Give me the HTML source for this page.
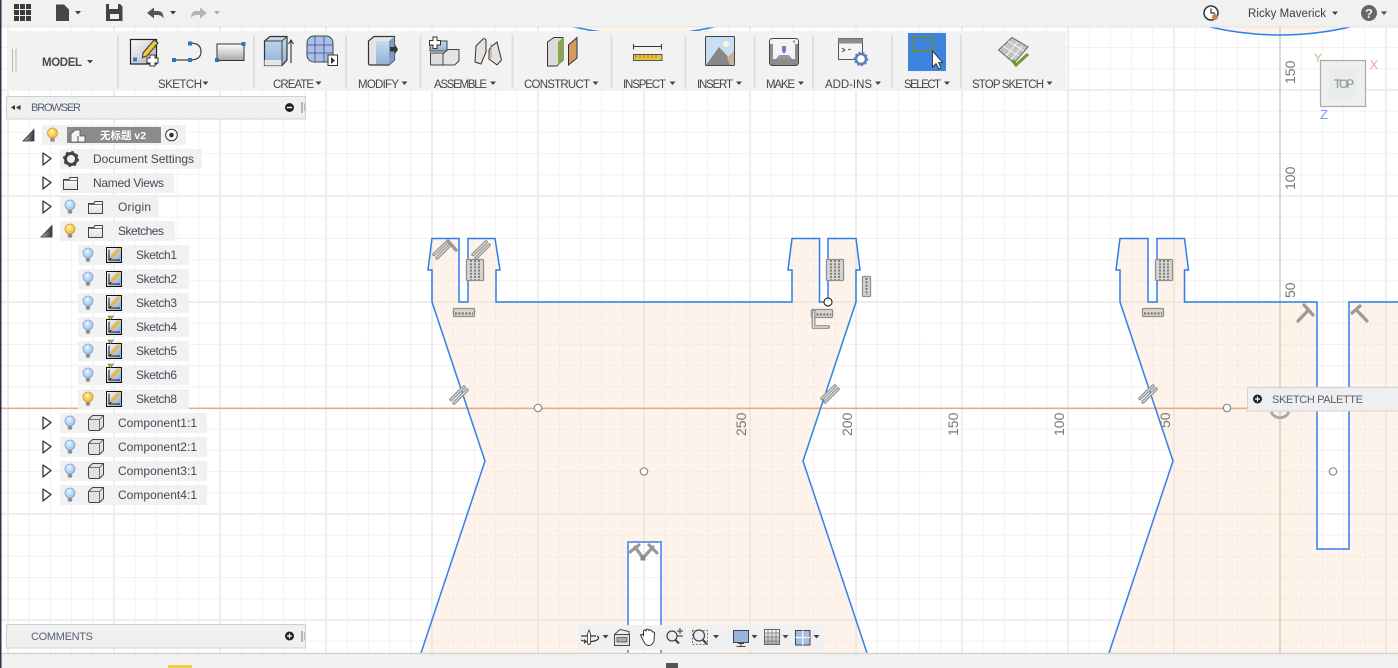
<!DOCTYPE html>
<html><head><meta charset="utf-8"><title>Sketch</title>
<style>
html,body{margin:0;padding:0;background:#fff;width:1398px;height:668px;overflow:hidden}
svg{display:block;position:absolute;left:0;top:0}
text{font-family:"Liberation Sans","Noto Sans CJK SC",sans-serif}
.t{font-size:11.5px;fill:#44464f}
.r{font-size:12px;fill:#444856}
.n{font-size:14px;fill:#777}
</style></head><body>
<svg width="1398" height="668" viewBox="0 0 1398 668" xmlns="http://www.w3.org/2000/svg">
<defs>
<pattern id="g1" patternUnits="userSpaceOnUse" x="1279.5" y="407.5" width="21.2" height="21.2"><rect width="1" height="21.2" fill="#f1f1f1"/><rect width="21.2" height="1" fill="#f1f1f1"/></pattern>
<pattern id="g2" patternUnits="userSpaceOnUse" x="1279" y="407" width="106" height="106"><rect width="2" height="106" fill="#eeeeee"/><rect width="106" height="2" fill="#eeeeee"/></pattern>
<pattern id="g3" patternUnits="userSpaceOnUse" x="1279.5" y="407.5" width="21.2" height="21.2"><path d="M.5 0V21.2M0 .5H21.2" stroke="#efe6dc" stroke-width="1" stroke-dasharray="3 2.300" fill="none"/></pattern>
<pattern id="g4" patternUnits="userSpaceOnUse" x="1279" y="407" width="106" height="106"><rect width="2" height="106" fill="#f0e7dd"/><rect width="106" height="2" fill="#f0e7dd"/></pattern>
<linearGradient id="gs" x1="0" y1="0" x2="1" y2="1"><stop offset="0" stop-color="#fff"/><stop offset="1" stop-color="#a9afb8"/></linearGradient>
<linearGradient id="gv" x1="0" y1="0" x2="0" y2="1"><stop offset="0" stop-color="#fff"/><stop offset="1" stop-color="#a8a8a8"/></linearGradient>
<linearGradient id="gb" x1="0" y1="0" x2="0" y2="1"><stop offset="0" stop-color="#c8daee"/><stop offset="1" stop-color="#8fb0d8"/></linearGradient>
<linearGradient id="gk" x1="0" y1="0" x2="1" y2="1"><stop offset="0" stop-color="#fff"/><stop offset="1" stop-color="#7fa3da"/></linearGradient>
<linearGradient id="gf" x1="0" y1="0" x2="0" y2="1"><stop offset="0" stop-color="#fdfdfd"/><stop offset="1" stop-color="#dfe3e6"/></linearGradient>
<linearGradient id="gt" x1="0" y1="0" x2="1" y2="0"><stop offset="0" stop-color="#bbb"/><stop offset="1" stop-color="#333"/></linearGradient>
<radialGradient id="bb" cx=".4" cy=".35" r=".7"><stop offset="0" stop-color="#e8f3fc"/><stop offset="1" stop-color="#8dbde6"/></radialGradient>
<radialGradient id="by" cx=".4" cy=".35" r=".7"><stop offset="0" stop-color="#fff3b0"/><stop offset="1" stop-color="#f0b020"/></radialGradient>
<g id="bulbB"><circle cx="0" cy="-2" r="5" fill="url(#bb)" stroke="#7fa8cc" stroke-width=".8"/><rect x="-2.200" y="3" width="4.400" height="3.600" rx="1" fill="#8c8c8c"/></g>
<g id="bulbY"><circle cx="0" cy="-2" r="5" fill="url(#by)" stroke="#d49a20" stroke-width=".8"/><rect x="-2.200" y="3" width="4.400" height="3.600" rx="1" fill="#8c8c8c"/></g>
<path id="tri" d="M0 0L8 5.500L0 12Z" fill="#fff" stroke="#333" stroke-width="1.300" stroke-linejoin="round"/>
<g id="folder"><path d="M.5 2.500H6L7 .5H14.500V12.500H.5Z" fill="url(#gf)" stroke="#444" stroke-width="1"/><path d="M.5 3.500H14.500" stroke="#555" stroke-width=".8"/></g>
<g id="sk"><rect x=".5" y=".5" width="15" height="15" fill="url(#gk)" stroke="#111"/><path d="M3 2.500V13H14" fill="none" stroke="#111" stroke-width="1"/><path d="M5 11L13 2" stroke="#e8b930" stroke-width="3"/><path d="M5 11L4 13" stroke="#333" stroke-width="1.200"/></g>
<g id="sw"><use href="#sk"/><path d="M2 -3H7L4.500 1Z" fill="#e9b53a" stroke="#555" stroke-width=".6"/></g>
<g id="comp"><path d="M.5 4.500L4.500 .5H15.500V11.500L11.500 15.500H2.500Q.5 15.500 .5 13.500Z" fill="#e0e2e4" stroke="#444" stroke-width="1"/><path d="M.5 4.500H11.500V15.500M11.500 4.500L15.500 .5" fill="none" stroke="#555" stroke-width=".8"/></g>
<g id="hblock" fill="none"><rect x=".5" y=".5" width="21" height="8" rx="1" fill="#d8d6d2" stroke="#8f8f8f" stroke-width="1.300"/><path d="M2 5.500h18" stroke-dasharray="2 1.400" stroke-width="2.200" stroke="#777"/></g>
<g id="vblock" fill="#d8d6d2"><rect x=".5" y=".5" width="17" height="21" rx="1" stroke="#8f8f8f" stroke-width="1.300"/><path d="M5 1V21M9 1V21M13 1V21" stroke="#777" stroke-width="1.800" stroke-dasharray="2 1.200"/></g>
<g id="par" stroke-linecap="round" fill="none"><path d="M-7 4.500L6 -8M-4 8L9 -5" stroke="#999" stroke-width="3.600"/><path d="M-7 4.500L6 -8M-4 8L9 -5" stroke="#ddd" stroke-width="1"/></g>
</defs>

<!-- canvas -->
<rect width="1398" height="668" fill="#fff"/>
<rect width="1398" height="668" fill="url(#g1)"/>
<rect width="1398" height="668" fill="url(#g2)"/>
<g fill="#fdf3ea">
<path id="s1" d="M432 238.500H459V302H468V238.500H495L500 270H496V302H792V270H788L792 238.500H819.500V302H828V238.500H856L860 270H856V302L803 461L867 653H661V542H628V653H421L485 461L432 302V270H428Z"/>
<path id="s2" d="M1120 238.500H1148V302H1157V238.500H1184.500L1188.500 270H1184.500V302H1317V549H1349V302H1400V653H1109L1173 461L1120 302V270H1116Z"/>
<path d="M574 27Q644 43 714 27Z"/><path d="M1210 27Q1280 43 1350 27Z"/>
</g>
<g fill="url(#g4)"><use href="#s1" style="fill:url(#g4)"/></g>
<path d="M432 238.500H459V302H468V238.500H495L500 270H496V302H792V270H788L792 238.500H819.500V302H828V238.500H856L860 270H856V302L803 461L867 653H661V542H628V653H421L485 461L432 302V270H428Z" fill="url(#g4)"/>
<path d="M1120 238.500H1148V302H1157V238.500H1184.500L1188.500 270H1184.500V302H1317V549H1349V302H1400V653H1109L1173 461L1120 302V270H1116Z" fill="url(#g4)"/>
<path d="M432 238.500H459V302H468V238.500H495L500 270H496V302H792V270H788L792 238.500H819.500V302H828V238.500H856L860 270H856V302L803 461L867 653H661V542H628V653H421L485 461L432 302V270H428Z" fill="url(#g3)"/>
<path d="M1120 238.500H1148V302H1157V238.500H1184.500L1188.500 270H1184.500V302H1317V549H1349V302H1400V653H1109L1173 461L1120 302V270H1116Z" fill="url(#g3)"/>
<rect x="1279.300" y="27" width="1.400" height="626" fill="#c4dcae"/>
<rect x="0" y="407.700" width="1398" height="1.400" fill="#e8a88a"/>
<g fill="none" stroke="#2f7fe8" stroke-width="1.500">
<path d="M421 653L485 461L432 302V270H428L432 238.500H459V302H468V238.500H495L500 270H496V302H792V270H788L792 238.500H819.500V302H828V238.500H856L860 270H856V302L803 461L867 653"/>
<path d="M628 653V542H661V653" stroke="#6e9cf0" stroke-width="2"/>
<path d="M1109 653L1173 461L1120 302V270H1116L1120 238.500H1148V302H1157V238.500H1184.500L1188.500 270H1184.500V302H1317V549H1349V302H1400"/>
<path d="M574 27Q644 43 714 27M1210 27Q1280 43 1350 27"/>
</g>
<!-- rulers -->
<g class="n">
<text class="n" transform="translate(746,436) rotate(-90)">250</text>
<text class="n" transform="translate(852,436) rotate(-90)">200</text>
<text class="n" transform="translate(958,436) rotate(-90)">150</text>
<text class="n" transform="translate(1064,436) rotate(-90)">100</text>
<text class="n" transform="translate(1170,428) rotate(-90)">50</text>
<text class="n" transform="translate(1295,84) rotate(-90)">150</text>
<text class="n" transform="translate(1295,190) rotate(-90)">100</text>
<text class="n" transform="translate(1295,298) rotate(-90)">50</text>
</g>
<!-- constraints -->
<use href="#par" x="441" y="250"/><path d="M448 241L456 250" stroke="#999" stroke-width="3.400" stroke-linecap="round"/>
<use href="#par" x="480" y="250"/>
<use href="#vblock" x="466" y="259"/><use href="#hblock" x="453" y="308"/>
<use href="#par" x="458" y="395"/>
<use href="#vblock" x="826" y="259"/>
<rect x="862.500" y="276.500" width="8" height="20" rx="1" fill="#d8d6d2" stroke="#8f8f8f" stroke-width="1.300"/><path d="M866.500 278V295" stroke="#777" stroke-width="2.200" stroke-dasharray="2 1.300"/>
<use href="#hblock" x="811" y="309"/>
<path d="M813.500 311V327M813.500 327H828" fill="none" stroke="#999" stroke-width="4" stroke-linecap="round"/>
<path d="M813.500 311V327H828" fill="none" stroke="#e8e6e2" stroke-width="1.200"/>
<use href="#par" x="829" y="394"/>
<use href="#vblock" x="1155" y="259"/><use href="#hblock" x="1142" y="308"/>
<use href="#par" x="1147" y="394"/>
<g fill="none" stroke="#9a9a9a" stroke-width="3.200" stroke-linecap="round">
<path d="M1304 305L1313 315M1308.500 310L1298 321"/>
<path d="M1352 313L1360 306M1356 309.500L1367 321"/>
<path d="M643 558L635 547M630 552L639 545M643 558L653 547M649 545L657 553"/>
</g>
<rect x="640.500" y="555.500" width="5" height="5" fill="#888"/>
<path d="M1271 412A10 10 0 0 0 1289 412" fill="none" stroke="#aaa" stroke-width="3"/>
<g fill="#fff" stroke="#888" stroke-width="1.200">
<circle cx="538" cy="408" r="3.700"/><circle cx="644" cy="471.500" r="3.700"/><circle cx="1227" cy="408" r="3.700"/><circle cx="1333" cy="471.500" r="3.700"/>
<circle cx="828" cy="302" r="4" stroke="#333"/>
</g>

<!-- view cube -->
<rect x="1320.500" y="60.500" width="45" height="46" fill="#efefef" stroke="#a8a8a8" stroke-width="1.200"/>
<rect x="1329" y="69" width="28" height="29" fill="#e9eced"/>
<text x="1344" y="88" text-anchor="middle" font-size="11.500" fill="#9a9a9a" stroke="#9a9a9a" stroke-width=".3" textLength="20" lengthAdjust="spacing">TOP</text>
<text x="1314" y="62" font-size="12" fill="#a0d07c">Y</text>
<text x="1370" y="69" font-size="12" fill="#e8a080">X</text>
<text x="1320" y="119" font-size="13" fill="#6c9ff0">Z</text>

<!-- top bar -->
<rect x="0" y="0" width="1398" height="27" fill="#f1f1f1"/>
<rect x="0" y="26.500" width="1398" height="1" fill="#e4e4e4"/>
<g fill="#3b3b3b">
<path d="M14 4h5v5h-5zM20 4h5v5h-5zM26 4h5v5h-5zM14 10h5v5h-5zM20 10h5v5h-5zM26 10h5v5h-5zM14 16h5v5h-5zM20 16h5v5h-5zM26 16h5v5h-5z"/>
<path d="M56 4.500H64L69 9.500V21H56Z" fill="#474747"/><path d="M75 11h6l-3 3.500z"/>
<path d="M106 4h14l2.500 2.500V21H106Z" fill="#444"/><rect x="109" y="4" width="9" height="5" fill="#f1f1f1"/><rect x="110" y="14" width="9" height="5" fill="#f1f1f1"/>
<path d="M147 13L154 7.500V11H158Q163.500 11 163.500 18.500Q161.500 15 158 15H154V18.500Z" fill="#555"/><path d="M170 11h6l-3 3.500z"/>
<path d="M207 13L200 7.500V11H196Q191 11 191 18.500Q193 15 196 15H200V18.500Z" fill="#b5b5b5"/><path d="M214 11h6l-3 3.500z" fill="#aaa"/>
</g>
<circle cx="1211" cy="13" r="7" fill="#fff" stroke="#333" stroke-width="1.500"/><path d="M1211 8.500V13H1215" fill="none" stroke="#333" stroke-width="1.200"/><circle cx="1215" cy="17" r="3" fill="#c9824a"/>
<text x="1248" y="17" font-size="11.500" fill="#3c3c4c" textLength="78" lengthAdjust="spacing">Ricky Maverick</text>
<path d="M1332 11.500h6l-3 3.500z" fill="#444"/>
<circle cx="1369" cy="13" r="8" fill="#666"/><text x="1369" y="18" text-anchor="middle" font-size="13" font-weight="bold" fill="#f1f1f1">?</text>
<path d="M1381 11.500h6l-3 3.500z" fill="#444"/>

<!-- toolbar -->
<rect x="7" y="31" width="1059" height="60" fill="#f2f2f2"/>
<g fill="#dedede">
<rect x="12" y="49" width="1" height="23" fill="#bbb"/><rect x="15.500" y="49" width="1" height="23" fill="#bbb"/>
<rect x="117" y="35" width="2" height="53"/><rect x="253" y="35" width="2" height="53"/><rect x="345" y="35" width="2" height="53"/><rect x="419.500" y="35" width="2" height="53"/><rect x="511.500" y="35" width="2" height="53"/><rect x="610.500" y="35" width="2" height="53"/><rect x="684.500" y="35" width="2" height="53"/><rect x="753.500" y="35" width="2" height="53"/><rect x="812" y="35" width="2" height="53"/><rect x="891" y="35" width="2" height="53"/><rect x="960" y="35" width="2" height="53"/>
</g>
<text x="42" y="66" font-size="11.500" font-weight="bold" fill="#484a55" textLength="40" lengthAdjust="spacing">MODEL</text>
<path d="M87 60h6l-3 3.500z" fill="#444"/>
<g class="t">
<text class="t" x="158" y="88" textLength="44" lengthAdjust="spacing">SKETCH</text>
<text class="t" x="273" y="88" textLength="41" lengthAdjust="spacing">CREATE</text>
<text class="t" x="358" y="88" textLength="41" lengthAdjust="spacing">MODIFY</text>
<text class="t" x="434" y="88" textLength="53" lengthAdjust="spacing">ASSEMBLE</text>
<text class="t" x="524" y="88" textLength="66" lengthAdjust="spacing">CONSTRUCT</text>
<text class="t" x="623" y="88" textLength="43" lengthAdjust="spacing">INSPECT</text>
<text class="t" x="697" y="88" textLength="36" lengthAdjust="spacing">INSERT</text>
<text class="t" x="766" y="88" textLength="29" lengthAdjust="spacing">MAKE</text>
<text class="t" x="825" y="88" textLength="47" lengthAdjust="spacing">ADD-INS</text>
<text class="t" x="904" y="88" textLength="37" lengthAdjust="spacing">SELECT</text>
<text class="t" x="972" y="88" textLength="72" lengthAdjust="spacing">STOP SKETCH</text>
</g>
<path d="M202.500 81.500h6l-3 3.500zM315.500 81.500h6l-3 3.500zM401.500 81.500h6l-3 3.500zM490 81.500h6l-3 3.500zM592.500 81.500h6l-3 3.500zM669.500 81.500h6l-3 3.500zM736 81.500h6l-3 3.500zM798 81.500h6l-3 3.500zM875 81.500h6l-3 3.500zM944 81.500h6l-3 3.500zM1046.500 81.500h6l-3 3.500z" fill="#444"/>

<!-- sketch icons -->
<rect x="130.500" y="39.500" width="26" height="24.500" fill="url(#gs)" stroke="#222" stroke-width="1.200"/>
<path d="M143 53L154 40L158 43L147 56L142.500 57.500Z" fill="#f0c63c" stroke="#333" stroke-width="1"/>
<rect x="133" y="57.500" width="4" height="4" fill="#3a78d0"/>
<path d="M150 55h5v3h3v5h-3v3h-5v-3h-3v-5h3z" fill="#fff" stroke="#333" stroke-width="1"/>
<path d="M174 60H190M190 43Q201 43 201 51.500Q201 60 190 60" fill="none" stroke="#444" stroke-width="1.200"/>
<rect x="172" y="58" width="4" height="4" fill="#2f6fd0"/><rect x="188" y="58" width="4" height="4" fill="#2f6fd0"/><rect x="188" y="41.500" width="4" height="4" fill="#2f6fd0"/>
<rect x="217" y="44" width="27" height="16.500" fill="url(#gv)" stroke="#333"/>
<rect x="215" y="58" width="4" height="4" fill="#2f6fd0"/><rect x="241.500" y="42" width="4" height="4" fill="#2f6fd0"/>

<!-- create -->
<path d="M264.500 41L270 36.500H287V60L282 65.500H264.500Z" fill="url(#gb)" stroke="#333" stroke-width="1.200"/><path d="M264.500 60H282V65.500H264.500Z" fill="#e6e6e6"/><path d="M264.500 41H282V65.500M282 41L287 36.500" fill="none" stroke="#444"/>
<path d="M291 63V41M288.500 44L291 40L293.500 44" fill="none" stroke="#333" stroke-width="1.100"/>
<rect x="307" y="36" width="26" height="26" rx="7" fill="#a9bfe6" stroke="#444"/><path d="M307 45H333M307 53H333M315 36V62M324 36V62" stroke="#3d4d80" stroke-width=".8"/>
<rect x="328" y="55" width="9.500" height="10.500" fill="#fff" stroke="#333"/><path d="M331 57L335 60.500L331 64Z" fill="#333"/>

<!-- modify -->
<path d="M368.500 41L374 36.500H394.500V60L389 65H370Q368.500 65 368.500 63Z" fill="#e5e5e5" stroke="#333" stroke-width="1.200"/><path d="M376 41H389V64.500H376Z" fill="url(#gb)"/><path d="M389 41L394.500 36.500V60L389 65Z" fill="#7d9cc0"/><path d="M390 47H395V44.500L398 49.500L395 54V51.500H390Z" fill="#333"/>
<!-- assemble -->
<path d="M430 41H447V51H430Z" fill="url(#gb)" stroke="#444"/><rect x="430.500" y="53" width="14.500" height="12" fill="#ddd" stroke="#444"/><path d="M443 54L448 49.500H459V61L454.500 65H443Z" fill="#e4e4e4" stroke="#444"/>
<path d="M433 37h4v3.500h3.500v4.500h-3.500v3.500h-4v-3.500h-3.500v-4.500h3.500z" fill="#fff" stroke="#333"/>
<path d="M475 62L476 46L483 39Q486 38 486 41V52L481 64ZM489 50L491 47L497 42L501.500 60L497 65L489 59Z" fill="#e3e3e3" stroke="#333"/><path d="M491 44V58" stroke="#c88a55" stroke-width="1"/>
<!-- construct -->
<path d="M547.500 42L554 37.500H563V60L557 66H547.500Z" fill="#dcdcdc" stroke="#333"/><path d="M558 42L563 37.500V60L558 66Z" fill="#88a848"/>
<path d="M568.500 45L577 37.500V58L568.500 65Z" fill="#d89a60" stroke="#333"/>
<!-- inspect -->
<path d="M633 46.500H662" stroke="#333" stroke-width="1"/><path d="M633.500 44V49.500M661.500 44V49.500" stroke="#333"/>
<rect x="633.500" y="54.500" width="28.500" height="6" fill="#ecc33c" stroke="#555"/><path d="M636 55V58M640 55V58M644 55V58M648 55V58M652 55V58M656 55V58" stroke="#8a6d10" stroke-width=".8"/>
<!-- insert -->
<rect x="705.500" y="36.500" width="29" height="29" rx="1" fill="#c9def0" stroke="#444"/><circle cx="726" cy="44" r="3" fill="#fff4d8"/><path d="M706 65L719 47L733 62V65Z" fill="#888"/><path d="M727 58L734 51V65H730Z" fill="#c4b494"/>
<!-- make -->
<rect x="769.500" y="38.500" width="29" height="27" rx="3" fill="#8c8c8c" stroke="#444"/><path d="M770 44V41.500Q770 39 773 39H795Q798 39 798 41.500V44Z" fill="#f3f3f3"/><rect x="773" y="44" width="22" height="15" fill="#f4f4f4"/><path d="M782 46h4v5l-2 3-2-3z" fill="#5f84c4"/><path d="M776 59H792L789 55H779Z" fill="#999"/><rect x="793" y="40.500" width="2" height="2" fill="#7aaa30"/>
<!-- add-ins -->
<rect x="838.500" y="38.500" width="24" height="21" fill="#f4f4f4" stroke="#555"/><rect x="838.500" y="38.500" width="24" height="5" fill="#8c8c8c"/>
<path d="M842 48L845 50L842 52M848 49.500H851" fill="none" stroke="#333" stroke-width=".8"/>
<circle cx="861" cy="59" r="5" fill="#fff" stroke="#5a82b8" stroke-width="2.500"/><circle cx="861" cy="59" r="6.500" fill="none" stroke="#5a82b8" stroke-width="1.500" stroke-dasharray="2 2"/>
<!-- select -->
<rect x="908" y="33" width="38" height="38" fill="#3e84df"/>
<rect x="912.500" y="37.500" width="20" height="13.500" fill="none" stroke="#6a8a2a" stroke-width="1.500"/>
<path d="M932.500 51V67L936 63.500L939 69L941 68L938.500 62.500H942.500Z" fill="#fff" stroke="#222" stroke-width=".8"/>
<!-- stop sketch -->
<path d="M998.500 50L1012 37.500L1028 47L1014 63Z" fill="#c4c4c4" stroke="#666"/><path d="M1003 46L1019 56M1008 41L1024 51M1006 56L1017 42.500M1011 60L1022 46" stroke="#f4f4f4" stroke-width="1"/>
<path d="M1012 60L1016 65L1028 54" fill="none" stroke="#6f9a25" stroke-width="3"/>

<!-- browser -->
<rect x="6.500" y="96.500" width="299" height="22.500" fill="#f0f0f0" stroke="#cfcfcf"/>
<path d="M11 107.500L15 105V110ZM16 107.500L20.500 105V110Z" fill="#333"/>
<text x="31" y="111" font-size="11" fill="#556070" textLength="50" lengthAdjust="spacing">BROWSER</text>
<circle cx="289.500" cy="107.500" r="4.500" fill="#222"/><rect x="286.800" y="106.800" width="5.400" height="1.400" fill="#fff"/>
<path d="M302 102V113" stroke="#777"/><path d="M304.500 103.500V111" stroke="#bbb"/>

<!-- tree chips -->
<g fill="#f1f1f1">
<rect x="42" y="125" width="144" height="20"/>
<rect x="60" y="149" width="142" height="20"/><rect x="60" y="173" width="114" height="20"/><rect x="60" y="197" width="99" height="20"/><rect x="60" y="221" width="115" height="20"/>
<rect x="78" y="245" width="111" height="20"/><rect x="78" y="269" width="111" height="20"/><rect x="78" y="293" width="111" height="20"/><rect x="78" y="317" width="111" height="20"/><rect x="78" y="341" width="111" height="20"/><rect x="78" y="365" width="111" height="20"/><rect x="78" y="389" width="111" height="20"/>
<rect x="60" y="413" width="147" height="20"/><rect x="60" y="437" width="147" height="20"/><rect x="60" y="461" width="147" height="20"/><rect x="60" y="485" width="147" height="20"/>
</g>
<path d="M23 141L34 129.500V141Z" fill="url(#gt)" stroke="#333" stroke-width=".8"/>
<path d="M41 237L52 225.500V237Z" fill="url(#gt)" stroke="#333" stroke-width=".8"/>
<use href="#tri" x="43" y="153"/><use href="#tri" x="43" y="177"/><use href="#tri" x="43" y="201"/><use href="#tri" x="43" y="417"/><use href="#tri" x="43" y="441"/><use href="#tri" x="43" y="465"/><use href="#tri" x="43" y="489"/>
<use href="#bulbY" x="52.500" y="135"/>
<rect x="67" y="127" width="94" height="16" fill="#8b8b8b"/>
<path d="M71 134L75 130H80V136L85 136V142H71Z" fill="#f3f3f3" stroke="#555" stroke-width=".8"/><path d="M78 136V142" stroke="#555"/>
<text x="100" y="139" font-size="10.500" font-weight="bold" fill="#fff">无标题 v2</text>
<circle cx="171.500" cy="135" r="5.800" fill="#fafafa" stroke="#333"/><circle cx="171.500" cy="135" r="2.300" fill="#333"/>
<circle cx="71" cy="159" r="5.500" fill="none" stroke="#444" stroke-width="3"/><circle cx="71" cy="159" r="7" fill="none" stroke="#444" stroke-width="2" stroke-dasharray="2.500 3"/>
<use href="#folder" x="63" y="177"/><use href="#folder" x="88" y="201"/><use href="#folder" x="88" y="225"/>
<use href="#bulbB" x="70" y="207"/><use href="#bulbY" x="70" y="231"/>
<use href="#bulbB" x="88" y="255"/><use href="#bulbB" x="88" y="279"/><use href="#bulbB" x="88" y="303"/><use href="#bulbB" x="88" y="327"/><use href="#bulbB" x="88" y="351"/><use href="#bulbB" x="88" y="375"/><use href="#bulbY" x="88" y="399"/>
<use href="#sk" x="106" y="247"/><use href="#sk" x="106" y="271"/><use href="#sk" x="106" y="295"/><use href="#sw" x="106" y="319"/><use href="#sw" x="106" y="343"/><use href="#sw" x="106" y="367"/><use href="#sk" x="106" y="391"/>
<use href="#bulbB" x="70" y="423"/><use href="#bulbB" x="70" y="447"/><use href="#bulbB" x="70" y="471"/><use href="#bulbB" x="70" y="495"/>
<use href="#comp" x="88" y="415"/><use href="#comp" x="88" y="439"/><use href="#comp" x="88" y="463"/><use href="#comp" x="88" y="487"/>
<g class="r">
<text class="r" x="93" y="163" textLength="101" lengthAdjust="spacing">Document Settings</text>
<text class="r" x="93" y="187" textLength="71" lengthAdjust="spacing">Named Views</text>
<text class="r" x="118" y="211" textLength="33" lengthAdjust="spacing">Origin</text>
<text class="r" x="118" y="235" textLength="46" lengthAdjust="spacing">Sketches</text>
<text class="r" x="136" y="259" textLength="41" lengthAdjust="spacing">Sketch1</text>
<text class="r" x="136" y="283" textLength="41" lengthAdjust="spacing">Sketch2</text>
<text class="r" x="136" y="307" textLength="41" lengthAdjust="spacing">Sketch3</text>
<text class="r" x="136" y="331" textLength="41" lengthAdjust="spacing">Sketch4</text>
<text class="r" x="136" y="355" textLength="41" lengthAdjust="spacing">Sketch5</text>
<text class="r" x="136" y="379" textLength="41" lengthAdjust="spacing">Sketch6</text>
<text class="r" x="136" y="403" textLength="41" lengthAdjust="spacing">Sketch8</text>
<text class="r" x="118" y="427" textLength="79" lengthAdjust="spacing">Component1:1</text>
<text class="r" x="118" y="451" textLength="79" lengthAdjust="spacing">Component2:1</text>
<text class="r" x="118" y="475" textLength="79" lengthAdjust="spacing">Component3:1</text>
<text class="r" x="118" y="499" textLength="79" lengthAdjust="spacing">Component4:1</text>
</g>

<!-- sketch palette -->
<rect x="1247.500" y="387.500" width="152" height="23.500" fill="#efefef" stroke="#d2d2d2"/>
<circle cx="1257.500" cy="399" r="4.500" fill="#222"/><path d="M1255 399H1260M1257.500 396.500V401.500" stroke="#fff" stroke-width="1.200"/>
<text x="1272" y="403" font-size="11" fill="#556070" textLength="91" lengthAdjust="spacing">SKETCH PALETTE</text>

<!-- comments -->
<rect x="6.500" y="624.500" width="299" height="23.500" fill="#f0f0f0" stroke="#cfcfcf"/>
<text x="31" y="640" font-size="11" fill="#556070" textLength="62" lengthAdjust="spacing">COMMENTS</text>
<circle cx="289.500" cy="636" r="4.500" fill="#222"/><path d="M287 636H292M289.500 633.500V638.500" stroke="#fff" stroke-width="1.200"/>
<path d="M302 631V642" stroke="#777"/><path d="M304.500 632.500V640" stroke="#bbb"/>

<!-- bottom bar -->
<rect x="0" y="653" width="1398" height="15" fill="#f1f1f1"/>
<rect x="0" y="652.800" width="1398" height="1.300" fill="#d2cfcc"/>
<rect x="0" y="0" width="1.500" height="668" fill="#2c3448"/>
<rect x="168" y="665" width="24" height="3" fill="#f0d040"/>
<rect x="666" y="663" width="12" height="5" fill="#555"/>

<!-- nav bar -->
<rect x="578" y="625" width="245" height="25" fill="#f0f0f0"/>
<g fill="#444">
<path d="M581 636H596M589 630V645" stroke="#333" stroke-width="1.200"/><path d="M581 640A8 3 0 0 0 597 636" fill="none" stroke="#333" stroke-width="1.200"/><path d="M584 639L587 641.500L584 644Z"/><path d="M587.500 634L589 630L590.500 634V644H587.500Z" fill="#fff" stroke="#333" stroke-width=".8"/>
<path d="M602.500 635h6l-3 3.500z"/>
<rect x="614.500" y="634.500" width="15" height="11" fill="#e4e4e4" stroke="#444"/><rect x="617" y="637.500" width="10" height="4.500" fill="#aaa" stroke="#444" stroke-width=".7"/><path d="M615 634L620 629.500L629 631.500V634" fill="none" stroke="#444"/>
<path d="M643 640L640.500 635Q641.500 633.500 643.500 635.500L643.500 630.500Q645 629 646 631L646.500 629.500Q648 628.500 649 630.500L650 630Q651.500 629.500 652 631.500L653 632Q655 632 654.500 634L654 641Q652 646 648 645.500Q645 645 643 640Z" fill="#fff" stroke="#333" stroke-width="1"/>
<circle cx="672" cy="636" r="5" fill="#e8eef4" stroke="#444" stroke-width="1.200"/><path d="M675.500 640L679 643.500" stroke="#444" stroke-width="2.200"/><path d="M677 631H683M680 628V634M677 636H683" stroke="#333" stroke-width="1"/>
<rect x="692.500" y="630.500" width="15" height="14" fill="none" stroke="#555" stroke-width=".8" stroke-dasharray="2 1.500"/><circle cx="699" cy="635.500" r="5.500" fill="#e8eef4" stroke="#444" stroke-width="1.200"/><path d="M703 640L707 644" stroke="#444" stroke-width="2.200"/>
<path d="M713 635h6l-3 3.500z"/>
<rect x="733.500" y="630.500" width="15" height="12" fill="#96b4dc" stroke="#444"/><path d="M738 643.500H744M741 643V646M736.500 646.500H745.500" stroke="#444" stroke-width="1"/>
<path d="M751.500 635h6l-3 3.500z"/>
<rect x="764.500" y="629.500" width="15" height="15" fill="url(#gv)" stroke="#666"/><path d="M768 630V644M772 630V644M776 630V644M765 633H779M765 637H779M765 641H779" stroke="#777" stroke-width=".8"/>
<path d="M782.500 635h6l-3 3.500z"/>
<rect x="795.500" y="630.500" width="14.500" height="14.500" fill="#a5bfe2" stroke="#444"/><path d="M795.500 637.500H810M802.700 630.500V645" stroke="#f0f0f0" stroke-width="1.400"/>
<path d="M813.500 635h6l-3 3.500z"/>
</g>
</svg>
</body></html>
